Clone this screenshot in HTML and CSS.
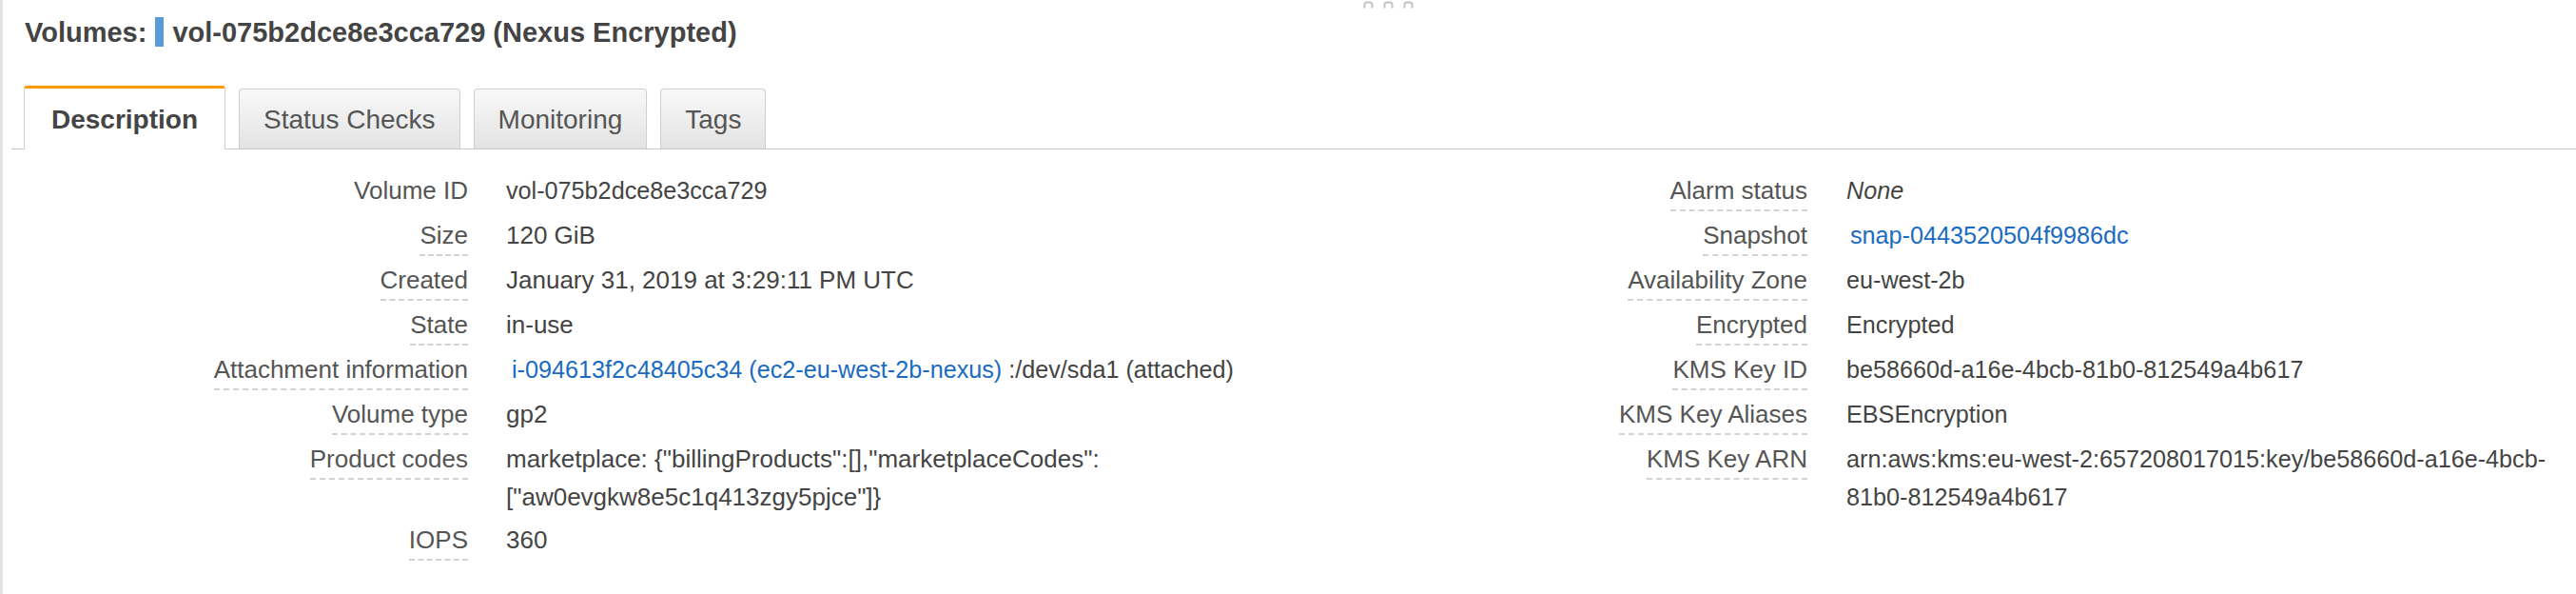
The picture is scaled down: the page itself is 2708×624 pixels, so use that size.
FILE: index.html
```html
<!DOCTYPE html>
<html lang="en">
<head>
<meta charset="utf-8">
<title>Volumes</title>
<link rel="stylesheet" href="styles.css">
</head>
<body>
<div class="page">
  <div class="handle" aria-hidden="true">
    <svg width="11" height="8" viewBox="0 0 11 8"><path d="M1.5 7.5 V4 Q1.5 1.5 4 1.5 H7 Q9.5 1.5 9.5 4 V7.5" fill="none" stroke="#c3c3c3" stroke-width="2"/></svg>
    <svg width="11" height="8" viewBox="0 0 11 8"><path d="M1.5 7.5 V4 Q1.5 1.5 4 1.5 H7 Q9.5 1.5 9.5 4 V7.5" fill="none" stroke="#c3c3c3" stroke-width="2"/></svg>
    <svg width="11" height="8" viewBox="0 0 11 8"><path d="M1.5 7.5 V4 Q1.5 1.5 4 1.5 H7 Q9.5 1.5 9.5 4 V7.5" fill="none" stroke="#c3c3c3" stroke-width="2"/></svg>
  </div>

  <h1 class="title">Volumes:<span class="marker"></span>vol-075b2dce8e3cca729 (Nexus Encrypted)</h1>

  <div class="tabs">
    <div class="tab active">Description</div>
    <div class="tab">Status Checks</div>
    <div class="tab">Monitoring</div>
    <div class="tab">Tags</div>
  </div>

  <div class="details">
    <dl class="fields fields-left">
      <dt class="plain">Volume ID</dt>
      <dd class="narrow">vol-075b2dce8e3cca729</dd>
      <dt>Size</dt>
      <dd>120 GiB</dd>
      <dt>Created</dt>
      <dd>January 31, 2019 at 3:29:11 PM UTC</dd>
      <dt>State</dt>
      <dd>in-use</dd>
      <dt>Attachment information</dt>
      <dd class="narrow indent"><a href="#">i-094613f2c48405c34 (ec2-eu-west-2b-nexus)</a> :/dev/sda1 (attached)</dd>
      <dt>Volume type</dt>
      <dd>gp2</dd>
      <dt>Product codes</dt>
      <dd>marketplace: {"billingProducts":[],"marketplaceCodes":<wbr>["aw0evgkw8e5c1q413zgy5pjce"]}</dd>
      <dt>IOPS</dt>
      <dd>360</dd>
    </dl>

    <dl class="fields fields-right">
      <dt>Alarm status</dt>
      <dd class="narrow"><em>None</em></dd>
      <dt>Snapshot</dt>
      <dd class="narrow indent-sm"><a href="#">snap-0443520504f9986dc</a></dd>
      <dt>Availability Zone</dt>
      <dd class="narrow">eu-west-2b</dd>
      <dt>Encrypted</dt>
      <dd class="narrow">Encrypted</dd>
      <dt>KMS Key ID</dt>
      <dd class="narrow">be58660d-a16e-4bcb-81b0-812549a4b617</dd>
      <dt>KMS Key Aliases</dt>
      <dd class="narrow">EBSEncryption</dd>
      <dt>KMS Key ARN</dt>
      <dd class="narrow">arn:aws:kms:eu-west-2:657208017015:key/be58660d-a16e-4bcb-<wbr>81b0-812549a4b617</dd>
    </dl>
  </div>
</div>
</body>
</html>
```

FILE: styles.css
```css
* {
  box-sizing: border-box;
}

html,
body {
  margin: 0;
  padding: 0;
  background: #ffffff;
}

body {
  font-family: "Liberation Sans", Arial, sans-serif;
  color: #444444;
}

.page {
  position: relative;
  min-height: 624px;
  border-left: 3px solid #e3e3e3;
}

.handle {
  position: absolute;
  top: 1px;
  left: 1430px;
  display: flex;
  gap: 10px;
}

.handle svg {
  display: block;
}

.title {
  margin: 0;
  padding: 14px 0 0 23px;
  font-size: 29px;
  line-height: 40px;
  font-weight: bold;
  color: #444444;
}

.marker {
  display: inline-block;
  width: 9px;
  height: 31px;
  margin: 0 9px 0 9px;
  background: #5a9bd5;
  vertical-align: -5px;
}

.tabs {
  display: flex;
  align-items: flex-end;
  gap: 14px;
  margin: 36px 0 0 9px;
  padding-left: 13px;
  border-bottom: 1px solid #c8c8c8;
}

.tab {
  font-size: 28px;
  line-height: 32px;
  padding: 16px 25px 14px;
  border: 1px solid #cfcfcf;
  border-bottom: 0;
  border-radius: 4px 4px 0 0;
  background: linear-gradient(#f8f8f8, #e3e3e3);
  color: #555555;
  white-space: nowrap;
}

.tab.active {
  padding: 17px 28px 15px;
  margin-bottom: -1px;
  border-top: 3px solid #ff9900;
  border-color: #ff9900 #cfcfcf #cfcfcf;
  border-radius: 3px 3px 0 0;
  background: #ffffff;
  font-weight: bold;
  color: #444444;
}

.details {
  display: flex;
  margin-top: 23px;
  font-size: 26px;
}

.fields {
  display: grid;
  row-gap: 5px;
  column-gap: 40px;
  margin: 0;
  align-content: start;
}

.fields-left {
  flex: 0 0 1400px;
  grid-template-columns: 489px 1fr;
}

.fields-right {
  flex: 1 1 auto;
  grid-template-columns: 497px 1fr;
  column-gap: 41px;
  padding-right: 8px;
}

.fields dt {
  justify-self: end;
  align-self: start;
  line-height: 40px;
  color: #555555;
  border-bottom: 2px dashed #d3d3d3;
  white-space: nowrap;
}

.fields dt.plain {
  border-bottom-color: transparent;
}

.fields dd {
  margin: 0;
  font-size: 26px;
  line-height: 40px;
  color: #444444;
}

.fields dd.narrow {
  font-size: 25.2px;
}

.fields dd.indent {
  padding-left: 6px;
}

.fields dd.indent-sm {
  padding-left: 4px;
}

.fields a {
  color: #1a6bc1;
  text-decoration: none;
}

.fields em {
  font-style: italic;
}
```
